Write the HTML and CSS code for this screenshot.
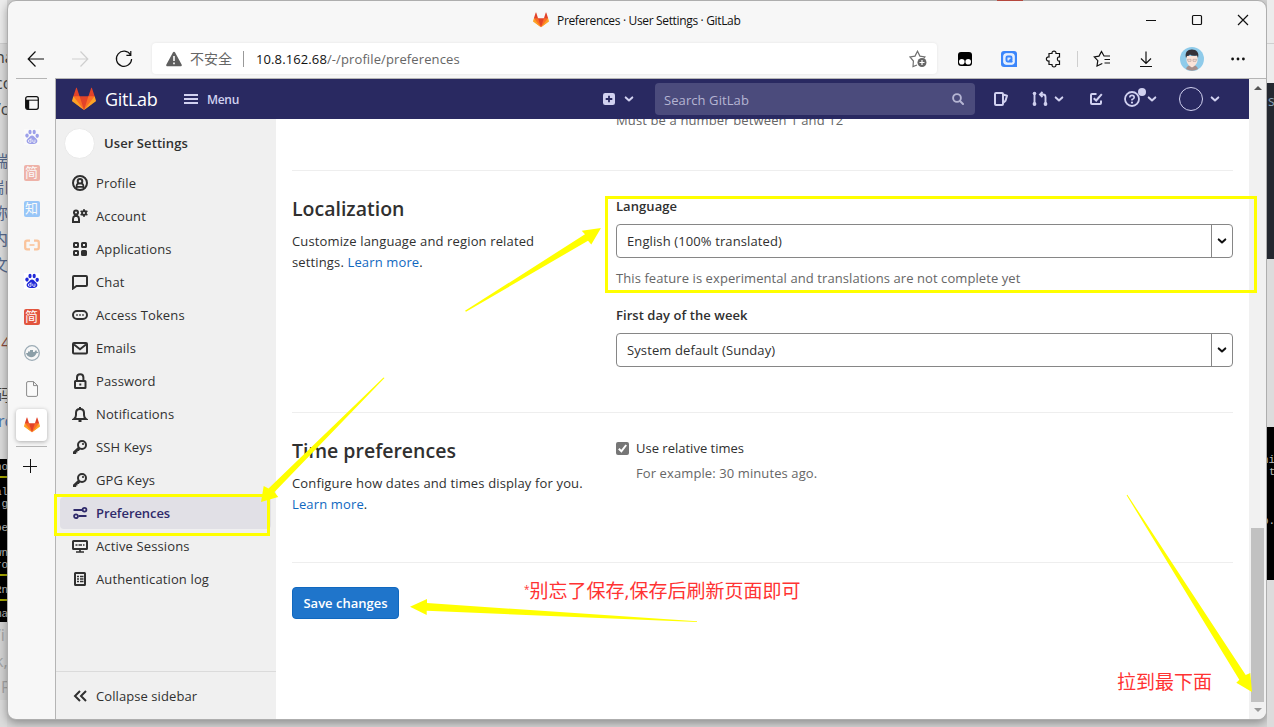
FILE: index.html
```html
<!DOCTYPE html>
<html lang="en">

<head>
    <meta charset="UTF-8">
    <meta name="viewport" content="width=device-width, initial-scale=1.0">
    <title>Preferences · User Settings · GitLab</title>
    <link rel="stylesheet" href="styles.css">
</head>

<body>
    <!-- shared icons -->
    <svg class="sprite">
        <symbol id="tanuki" viewBox="0 0 36 36">
            <path fill="#e24329" d="M2 14l9.38 9v-9l-4-12.28c-.205-.632-1.176-.632-1.38 0z" />
            <path fill="#e24329" d="M34 14l-9.38 9v-9l4-12.28c.205-.632 1.176-.632 1.38 0z" />
            <path fill="#e24329" d="M18 34.38L3 14h30z" />
            <path fill="#fc6d26" d="M18 34.38L11.38 14H2l4 11z" />
            <path fill="#fc6d26" d="M18 34.38L24.62 14H34l-4 11z" />
            <path fill="#fca326" d="M2 14L.1 20.16c-.18.565 0 1.2.5 1.56L18 34.38z" />
            <path fill="#fca326" d="M34 14l1.9 6.16c.18.565 0 1.2-.5 1.56L18 34.38z" />
        </symbol>
        <symbol id="chevron" viewBox="0 0 10 10">
            <path d="M1.7 3.4L5 6.5l3.3-3.1" fill="none" stroke="currentColor" stroke-width="2" stroke-linecap="round" stroke-linejoin="round" />
        </symbol>
        <symbol id="paw" viewBox="0 0 16 16">
            <g fill="currentColor">
                <ellipse cx="3" cy="6.600" rx="1.700" ry="2.100" />
                <ellipse cx="6" cy="3" rx="1.600" ry="2.200" />
                <ellipse cx="10.200" cy="3" rx="1.600" ry="2.200" />
                <ellipse cx="13.200" cy="6.800" rx="1.700" ry="2.100" />
                <path d="M8 6.400c1.600 0 2.200 1.300 3.200 2.400 1.200 1.200 2.600 2 2.100 4-.4 1.800-2.300 2.300-5.300 2.300s-4.900-.5-5.300-2.300c-.5-2 .9-2.800 2.100-4C5.800 7.700 6.400 6.400 8 6.400z" />
            </g>
            <path d="M7 9.200v4.100H5.700a1.200 1.200 0 0 1 0-2.600H7M8.800 10.700v1.800q0 .8.900.8h1.300v-2.600" fill="none" stroke="#fff" stroke-width=".8" />
        </symbol>
        <symbol id="key" viewBox="0 0 16 16">
            <circle cx="10" cy="6" r="4" fill="none" stroke="currentColor" stroke-width="2" />
            <circle cx="11" cy="5" r="1.100" fill="currentColor" />
            <path fill="currentColor" d="M6.300 7.800l2.200 2.200L6.800 12H5.500v1.500H4.200V15H1v-2.300z" />
        </symbol>
    </svg>

    <div class="desktop">
        <div class="behind behind-left">
            <div class="doc-top"></div>
            <div class="doc">
                <p>na</p>
                <p>co</p>
                <p>/c</p>
                <p></p>
                <p class="blue">端</p>
                <p class="blue cut">端口</p>
                <p class="blue">称</p>
                <p class="blue">内</p>
                <p class="blue">文</p>
                <p></p>
                <p></p>
                <p class="red">14</p>
                <p></p>
                <p>码</p>
                <p class="link">rc</p>
            </div>
            <div class="term">
                <p>ho</p>
                <p class="mark"></p>
                <p>al</p>
                <p>'g</p>
                <p></p>
                <p>be</p>
                <p></p>
                <p>wn</p>
                <p>ro</p>
                <p class="mark"></p>
                <p>Rn</p>
                <p class="mark"></p>
                <p>ma</p>
            </div>
            <div class="doc-faded">
                <p>/i</p>
                <p>k,</p>
                <p class="last">F</p>
            </div>
        </div>

        <div class="window">
            <div class="titlebar">
                <div class="page-title">
                    <svg width="16" height="16"><use href="#tanuki" /></svg>
                    <span>Preferences · User Settings · GitLab</span>
                </div>
                <div class="controls">
                    <svg width="46" height="38"><path d="M18 19.500h10" /></svg>
                    <svg width="46" height="38"><rect x="18.500" y="14.500" width="9" height="9" rx="1" /></svg>
                    <svg width="46" height="38"><path d="M18 14l10 10M28 14L18 24" /></svg>
                </div>
            </div>

            <div class="toolbar">
                <div class="tool"><svg width="18" height="18" viewBox="0 0 18 18"><path d="M17 9H1.500M8.500 1.500L1.200 9l7.300 7.500" /></svg></div>
                <div class="tool off"><svg width="18" height="18" viewBox="0 0 18 18"><path d="M1 9h15.500M9.500 1.500L16.800 9l-7.300 7.500" /></svg></div>
                <div class="tool"><svg width="18" height="18" viewBox="0 0 18 18"><path d="M15.600 5A7.600 7.600 0 1 0 16.600 9M15.800 1v4.300h-4.400" /></svg></div>

                <div class="address">
                    <svg width="16" height="16" viewBox="0 0 16 16">
                        <path fill="#5f5f5f" d="M8 .8c.5 0 .9.300 1.100.7l6.500 12c.5.900 0 1.700-1 1.700H1.400c-1 0-1.500-.8-1-1.700l6.500-12c.2-.4.600-.7 1.100-.7z" />
                        <path stroke="#fff" stroke-width="1.600" d="M8 5v5M8 11.500v1.700" />
                    </svg>
                    <span class="insecure">不安全</span>
                    <span class="url"><b>10.8.162.68</b>/-/profile/preferences</span>
                    <svg class="fav" width="18" height="18" viewBox="0 0 18 18">
                        <path fill="none" stroke="#707070" stroke-width="1.200" d="M8 15l-4 1.500.4-5.500L1 7l5-.9L8.500 1.200l2.400 4.900 5 .9-1.200 1.500" />
                        <circle cx="13" cy="12.500" r="4.500" fill="#666" />
                        <path stroke="#fff" stroke-width="1.200" d="M13 10v5M10.500 12.500h5" />
                    </svg>
                </div>

                <div class="tools">
                    <div class="tool">
                        <svg width="16" height="16" viewBox="0 0 16 16">
                            <rect x="1" y="1" width="14" height="14" rx="3" fill="#000" stroke="none" />
                            <circle cx="4.800" cy="10.800" r="2.800" fill="#fff" stroke="none" />
                            <circle cx="11.200" cy="10.800" r="2.800" fill="#fff" stroke="none" />
                        </svg>
                    </div>
                    <div class="tool">
                        <svg width="16" height="16" viewBox="0 0 16 16">
                            <path fill="#3b86fb" stroke="none" d="M3 0h10a3 3 0 0 1 3 3v13H3a3 3 0 0 1-3-3V3a3 3 0 0 1 3-3z" />
                            <rect x="2.800" y="2.800" width="10.400" height="10.400" rx="2" fill="#dbe9ff" stroke="#fff" stroke-width="1" />
                            <path fill="none" stroke="#3b86fb" stroke-width="1.900" d="M6.700 5.500h2.600a1.200 1.200 0 0 1 1.200 1.200v2.600a1.200 1.200 0 0 1-1.200 1.200H6.700a1.200 1.200 0 0 1-1.200-1.200V6.700a1.200 1.200 0 0 1 1.200-1.200zM8.500 8.500l2.700 2.700" />
                        </svg>
                    </div>
                    <div class="tool puzzle">
                        <svg width="18" height="18" viewBox="0 0 18 18">
                            <path d="M4 3.500h3C6.600.2 11.400.2 11 3.500h3.500V7c-2.800-.6-2.800 4.600 0 4v3.500H11c.4 3.300-4.400 3.300-4 0H4V11C.5 11.500.5 6.500 4 7z" />
                        </svg>
                    </div>
                    <i class="sep"></i>
                    <div class="tool">
                        <svg width="18" height="18" viewBox="0 0 18 18">
                            <path d="M9.300 13.500L4 16l.8-5.300L1.300 7l4.700-.9L8.500 1.500 11 6h6M11.500 9.500H17M11.500 13H17" />
                        </svg>
                    </div>
                    <div class="tool"><svg width="16" height="18" viewBox="0 0 16 18"><path d="M8 1.500v12M3 8.500l5 5 5-5M2 16.500h12" /></svg></div>
                    <div class="tool face">
                        <svg width="24" height="24" viewBox="0 0 24 24">
                            <circle cx="12" cy="12" r="12" fill="#8fcbea" stroke="none" />
                            <path d="M6 22q1-4 6-4t6 4q-6 3.500-12 0z" fill="#a68f8b" stroke="none" />
                            <path d="M6.500 9h11v5q-1 4-5.500 6.500Q7.500 18 6.500 14z" fill="#fbe3d8" stroke="none" />
                            <path d="M6 11C4.500 5 8 2.300 12 2.500c4.500 0 7.500 3 6 8.500l-1-2.500q-5 1-7-1-1 1.500-3 1.500z" fill="#343239" stroke="none" />
                            <path d="M7.500 12.300h3.500v2H8zM13 12.300h3.500l-.5 2h-3z" stroke="#a99" stroke-width=".6" />
                        </svg>
                    </div>
                    <div class="tool">
                        <svg width="16" height="6" viewBox="0 0 16 6"><g fill="#111" stroke="none"><circle cx="2.600" cy="3" r="1.400" /><circle cx="8" cy="3" r="1.400" /><circle cx="13.400" cy="3" r="1.400" /></g></svg>
                    </div>
                </div>
            </div>

            <div class="content">
                <div class="tabs">
                    <div class="tab first"><svg width="14" height="14" viewBox="0 0 14 14"><rect x=".7" y=".7" width="12.600" height="12.600" rx="2" fill="none" stroke="#111" stroke-width="1.300" /><path d="M1 4.200h12.500" stroke="#111" /><path d="M1 4h3.200v9H2a1 1 0 0 1-1-1z" fill="#111" /></svg></div>
                    <div class="tab faded"><svg class="paw" width="16" height="16"><use href="#paw" /></svg></div>
                    <div class="tab faded"><span class="square jian">简</span></div>
                    <div class="tab faded"><span class="square zhi">知</span></div>
                    <div class="tab faded"><svg width="16" height="12" viewBox="0 0 16 12"><path d="M6 1.700H3Q1.200 1.700 1.200 3.500v5q0 1.800 1.800 1.800h3M10 1.700h3q1.800 0 1.800 1.800v5q0 1.800-1.800 1.800h-3" fill="none" stroke="#ff7f20" stroke-width="2.300" /><path d="M5.500 6h5" stroke="#ff7f20" stroke-width="1.600" /></svg></div>
                    <div class="tab"><svg class="paw" width="16" height="16"><use href="#paw" /></svg></div>
                    <div class="tab"><span class="square jian">简</span></div>
                    <div class="tab"><svg width="16" height="16" viewBox="0 0 16 16"><circle cx="8" cy="8" r="7.300" fill="none" stroke="#9babb5" stroke-width="1.300" /><path d="M2 8h2V6.500h2V5h3v2h1.500q1-1.500 1.500-2 .8.800.8 1.800 1 0 1.600.4-.7 1-2 1Q11 12 7 12.200 3 12 2 8z" fill="#8c9fa8" /></svg></div>
                    <div class="tab"><svg width="12" height="16" viewBox="0 0 12 16"><path d="M2 .6h5.500l4 4V14q0 1.400-1.300 1.400H2Q.6 15.400.6 14V2Q.6.6 2 .6zM7.500.6v4h4" fill="#fafafa" stroke="#8a8a8a" /></svg></div>
                    <div class="tab current"><svg width="16" height="16"><use href="#tanuki" /></svg></div>
                    <div class="tab add"><svg width="14" height="14"><path d="M7.500 0v14M0 7.500h14" stroke="#111" /></svg></div>
                </div>

                <div class="page">
                    <div class="navbar">
                        <svg width="24" height="24"><use href="#tanuki" /></svg>
                        <span class="wordmark">GitLab</span>
                        <svg class="burger" width="14" height="12"><path d="M0 2h14M0 6h14M0 10h14" stroke="#d1d1f0" stroke-width="2" /></svg>
                        <span class="menu">Menu</span>
                        <svg class="plus" width="12" height="12" viewBox="0 0 12 12"><rect width="12" height="12" rx="2.200" fill="#d1d1f0" /><path d="M6 2.700v6.600M2.700 6h6.600" stroke="#292961" stroke-width="1.800" /></svg>
                        <svg class="caret plus-caret" width="10" height="10"><use href="#chevron" /></svg>
                        <div class="search">
                            <span>Search GitLab</span>
                            <svg width="12" height="12" viewBox="0 0 12 12"><circle cx="5" cy="5" r="3.900" fill="none" stroke="#b5b5d3" stroke-width="1.900" /><path d="M8 8l3 3" stroke="#b5b5d3" stroke-width="2" stroke-linecap="round" /></svg>
                        </div>
                        <svg class="issues" width="15" height="14" viewBox="0 0 15 14"><path d="M2 1h6a1 1 0 0 1 1 1v10a1 1 0 0 1-1 1H2a1 1 0 0 1-1-1V2a1 1 0 0 1 1-1zM9 2.500l4 1.300-1.500 5L9 11" fill="none" stroke="#d1d1f0" stroke-width="2" stroke-linejoin="round" /></svg>
                        <svg class="merge" width="16" height="16" viewBox="0 0 16 16"><path d="M2.500 4v8M13.500 12V6q0-2.500-2.500-2.500H8.500M10.500 1L8 3.500 10.500 6" fill="none" stroke="#d1d1f0" stroke-width="1.900" /><g fill="#d1d1f0"><circle cx="2.500" cy="2.500" r="1.800" /><circle cx="2.500" cy="13" r="1.900" /><circle cx="13.500" cy="13" r="1.900" /></g></svg>
                        <svg class="caret merge-caret" width="10" height="10"><use href="#chevron" /></svg>
                        <svg class="todo" width="14" height="14" viewBox="0 0 14 14"><path d="M7.500 2H3a1 1 0 0 0-1 1v8a1 1 0 0 0 1 1h8a1 1 0 0 0 1-1V8.500M4.700 6.200L7.200 8.500l5.600-6.300" fill="none" stroke="#d1d1f0" stroke-width="2" /></svg>
                        <div class="help">
                            <svg width="16" height="16" viewBox="0 0 16 16"><circle cx="8" cy="8" r="7" fill="none" stroke="#d1d1f0" stroke-width="1.800" /><path d="M5.800 6.500Q5.800 4.400 8 4.400t2.200 2Q10.200 7.600 8 8.500v1" fill="none" stroke="#d1d1f0" stroke-width="1.600" /><circle cx="8" cy="11.600" r="1.100" fill="#d1d1f0" /></svg>
                            <i class="dot"></i>
                        </div>
                        <svg class="caret help-caret" width="10" height="10"><use href="#chevron" /></svg>
                        <i class="me"></i>
                        <svg class="caret me-caret" width="10" height="10"><use href="#chevron" /></svg>
                    </div>

                    <div class="layout">
                        <div class="sidebar">
                            <div class="side-head"><i class="avatar"></i>User Settings</div>
                            <a class="side-item"><svg viewBox="0 0 16 16"><circle cx="8" cy="8" r="7" /><circle cx="8" cy="6.200" r="2.300" /><path d="M4.600 13V11q0-2 2-2.300M11.400 13V11q0-2-2-2.300M4.500 11.800h7" stroke-width="1.700" /></svg>Profile</a>
                            <a class="side-item"><svg viewBox="0 0 16 16"><circle cx="4" cy="4.500" r="2" /><path d="M1 14v-3q0-2.300 1.700-3h2.600Q7 8.700 7 11v3z" /><circle cx="12" cy="5" r="2" stroke-width="1.800" /><path d="M12 1v8M8.600 3l6.800 4M15.400 3L8.600 7" stroke-width="1.500" /><circle cx="12" cy="5" r="1" fill="#f0f0f0" stroke="none" /></svg>Account</a>
                            <a class="side-item"><svg viewBox="0 0 16 16"><rect x="2" y="2" width="4" height="4" rx=".5" /><rect x="10" y="2" width="4" height="4" rx=".5" /><rect x="2" y="10" width="4" height="4" rx=".5" /><rect x="10" y="10" width="4" height="4" rx=".5" fill="currentColor" /></svg>Applications</a>
                            <a class="side-item"><svg viewBox="0 0 16 16"><path d="M1 14V3q0-1 1-1h12q1 0 1 1v8q0 1-1 1H4.500L1 14.500z" /></svg>Chat</a>
                            <a class="side-item"><svg viewBox="0 0 16 16"><rect x="1" y="4" width="14" height="8" rx="4" /><path d="M4.200 8h1.600M7.200 8h1.600M10.200 8h1.600" stroke-width="1.600" /></svg>Access Tokens</a>
                            <a class="side-item"><svg viewBox="0 0 16 16"><rect x="1" y="3" width="14" height="10.500" rx="1" /><path d="M2 4.500l6 4.700 6-4.700" /></svg>Emails</a>
                            <a class="side-item"><svg viewBox="0 0 16 16"><rect x="3" y="8" width="10.500" height="7" rx=".5" /><path d="M5 8V4.500Q5 1.200 8.200 1.200t3.200 3.300V8" /><path d="M7.300 11.500h2" /></svg>Password</a>
                            <a class="side-item"><svg viewBox="0 0 16 16"><path d="M2 13q2-1.500 2-4V7q0-4 4-4t4 4v2q0 2.500 2 4z" /><path d="M8 1v2M6.500 15h3" /></svg>Notifications</a>
                            <a class="side-item"><svg viewBox="0 0 16 16" class="plain"><use href="#key" /></svg>SSH Keys</a>
                            <a class="side-item"><svg viewBox="0 0 16 16" class="plain"><use href="#key" /></svg>GPG Keys</a>
                            <a class="side-item active"><svg viewBox="0 0 16 16"><path d="M1.500 5H10M6.500 11H14.500" /><circle cx="12.500" cy="4.700" r="1.900" stroke-width="1.800" /><circle cx="4" cy="11.200" r="1.900" stroke-width="1.800" /></svg>Preferences</a>
                            <a class="side-item"><svg viewBox="0 0 16 16"><rect x="1" y="3" width="14" height="8" rx=".5" /><path d="M3.500 7h2M6.500 7h3.500M11 7h1.500M8 11v3M4 14h8" stroke-width="1.700" /></svg>Active Sessions</a>
                            <a class="side-item"><svg viewBox="0 0 16 16"><rect x="3" y="2" width="10" height="12" rx=".5" /><path d="M5 5.500h2M8 5.500h3.500M5 8h2M8 8h3.500M5 10.500h2M8 10.500h3.500" stroke-width="1.300" /></svg>Authentication log</a>
                            <a class="side-item collapse"><svg viewBox="0 0 16 16"><path d="M8 3L3 8l5 5M14 3L9 8l5 5" /></svg>Collapse sidebar</a>
                        </div>

                        <div class="main">
                            <p class="hint clipped">Must be a number between 1 and 12</p>

                            <div class="row localization">
                                <div class="about">
                                    <h4>Localization</h4>
                                    <p>Customize language and region related<br>settings. <a>Learn more</a>.</p>
                                </div>
                                <div class="fields">
                                    <label>Language</label>
                                    <div class="select"><span>English (100% translated)</span><i><svg width="10" height="10"><use href="#chevron" /></svg></i></div>
                                    <p class="hint">This feature is experimental and translations are not complete yet</p>
                                    <label class="second">First day of the week</label>
                                    <div class="select"><span>System default (Sunday)</span><i><svg width="10" height="10"><use href="#chevron" /></svg></i></div>
                                </div>
                            </div>

                            <div class="row time">
                                <div class="about">
                                    <h4>Time preferences</h4>
                                    <p>Configure how dates and times display for you.<br><a>Learn more</a>.</p>
                                </div>
                                <div class="fields">
                                    <div class="check">
                                        <svg width="13" height="13" viewBox="0 0 13 13"><rect width="13" height="13" rx="2" fill="#767676" /><path d="M2.800 6.800l2.600 2.500 4.800-6.300" fill="none" stroke="#fff" stroke-width="2" /></svg>
                                        <span>Use relative times</span>
                                    </div>
                                    <p class="hint example">For example: 30 minutes ago.</p>
                                </div>
                            </div>

                            <div class="row save">
                                <button class="btn">Save changes</button>
                            </div>
                        </div>
                    </div>
                </div>

                <div class="scrollbar">
                    <i class="up"></i>
                    <i class="thumb"></i>
                    <i class="down"></i>
                </div>
            </div>
        </div>

        <div class="behind behind-right">
            <div class="doc-top"></div>
            <div class="strip"></div>
            <div class="editor">s</div>
            <div class="gap"></div>
            <div class="term">
                <p></p>
                <p></p>
                <p>ni</p>
                <p class="near">t</p>
                <p></p>
                <p></p>
                <p></p>
                <p>b.</p>
            </div>
        </div>
    </div>

    <!-- notes drawn over the screen -->
    <div class="box box-language"></div>
    <div class="box box-preferences"></div>
    <svg class="arrows" width="1274" height="727" fill="#ffff00">
        <path d="M601 228L581.700 230.700l3.300 3.600L465 310.800l1 1L588 240.700l3.300 3.700z" />
        <path d="M261 502l2.700-16 4.800 2.500L383.500 377.500l1 .6L274.500 492l3.700 5z" />
        <path d="M410 606.800l17-7.800v4l270 18.300v.7l-270.300-11.200V615z" />
        <path d="M1252 692l-1.700-19-4.600 2L1127.400 494.800l-.8.5 112.700 184.400-3 3z" />
    </svg>
    <div class="note note-save"><sup>*</sup>别忘了保存,保存后刷新页面即可</div>
    <div class="note note-scroll">拉到最下面</div>
    <i class="scrap"></i>
</body>

</html>
```
FILE: styles.css
```css
* {
    box-sizing: border-box;
}

body {
    margin: 0;
    position: relative;
    width: 1274px;
    height: 727px;
    overflow: hidden;
    background: #d6d6d6;
    font-family: "Open Sans", "Noto Sans CJK SC", sans-serif;
    font-size: 13px;
    color: #303030;
}

p, h4 {
    margin: 0;
}

svg {
    display: block;
    flex: none;
}

.sprite {
    position: absolute;
    width: 0;
    height: 0;
}

.desktop {
    display: flex;
    height: 727px;
}

/* slivers of the windows behind the browser */
.behind {
    width: 7px;
    height: 727px;
    overflow: hidden;
    white-space: nowrap;
    background: #dcdcdc;
}

.doc-top {
    height: 44px;
    background: #ececec;
    border-bottom: 1px solid #cfcfcf;
}

.doc {
    height: 415px;
    font-size: 16px;
    line-height: 26px;
    color: #444;
}

.doc p,
.doc-faded p {
    height: 26px;
    margin-left: -5px;
}

.doc .blue {
    color: #56698c;
    margin-left: -8px;
}

.doc .cut {
    margin-left: -12px;
}

.doc .red {
    color: #8b4a3c;
    margin-left: -8px;
}

.doc .link {
    color: #4a78b0;
    margin-left: -2px;
}

.doc-faded .last {
    margin-left: 1px;
}

.term {
    height: 163px;
    padding-top: 2px;
    background: #000;
    color: #bbb;
    font-family: "Liberation Mono", monospace;
    font-size: 11px;
    line-height: 12.25px;
}

.term p {
    height: 12.25px;
    margin-left: -5px;
}

.term .near {
    margin-left: 2px;
}

.term .mark {
    border-bottom: 2px solid #a5a500;
    height: 5px;
    margin-bottom: 7.25px;
}

.doc-faded {
    height: 78px;
    background: #d3d3d3;
    font-size: 16px;
    line-height: 26px;
    color: #a5a5a5;
}

.behind-right .strip {
    height: 39px;
    background: #ececec;
}

.editor {
    height: 176px;
    padding: 8px 0 0 1px;
    background: #242830;
    color: #8aa0b4;
    font-size: 14px;
}

.behind-right .gap {
    height: 168px;
}

.behind-right .term {
    height: 153px;
}

/* browser */
.window {
    display: flex;
    flex-direction: column;
    width: 1260px;
    height: 720px;
    border: 1px solid #aeaeae;
    border-radius: 9px;
    overflow: hidden;
    background: #f7f7f7;
    box-shadow: 0 3px 10px rgba(0, 0, 0, .35);
}

.titlebar {
    display: flex;
    height: 38px;
    justify-content: space-between;
}

.page-title {
    display: flex;
    align-items: center;
    gap: 8px;
    margin-left: 525px;
    font-size: 12px;
    letter-spacing: -.34px;
    color: #111;
}

.controls {
    display: flex;
}

.controls svg,
.tool svg {
    fill: none;
    stroke: #111;
    stroke-width: 1.2;
}

.toolbar {
    display: flex;
    align-items: center;
    height: 39px;
    padding-left: 6px;
}

.tool {
    width: 44px;
    display: flex;
    justify-content: center;
}

.tool.off svg {
    stroke: #cfcfcf;
}

.address {
    display: flex;
    align-items: center;
    width: 785px;
    height: 31px;
    margin-left: 6px;
    padding: 0 10px 0 14px;
    border-radius: 4px;
    background: #fff;
    box-shadow: 0 0 3px rgba(0, 0, 0, .08);
}

.insecure {
    margin-left: 8px;
    width: 54px;
    font-size: 14px;
    line-height: 16px;
    color: #666;
    border-right: 1px solid #999;
}

.url {
    margin-left: 12px;
    letter-spacing: .11px;
    color: #666;
}

.url b {
    font-weight: 400;
    color: #111;
}

.fav {
    margin-left: auto;
}

.tools {
    display: flex;
    align-items: center;
    margin-left: 6px;
}

.puzzle {
    padding-left: 2px;
}

.sep {
    width: 1px;
    height: 16px;
    margin: 0 2px;
    background: #cfcfcf;
}

.face {
    margin: 0 2px;
}

.content {
    display: flex;
    flex: 1;
    min-height: 0;
}

.tabs {
    display: flex;
    flex-direction: column;
    align-items: center;
    width: 47px;
}

.tab {
    display: flex;
    align-items: center;
    justify-content: center;
    width: 31px;
    height: 36px;
    flex: none;
}

.first {
    height: 41px;
    padding-top: 8px;
    border-top: 1px solid #b5b5b5;
}

.faded svg,
.faded .square {
    opacity: .42;
}

.paw {
    color: #2129d8;
    background: #fff;
}

.square {
    width: 16px;
    height: 16px;
    border-radius: 2px;
    color: #fff;
    font-size: 13px;
    line-height: 15px;
    text-align: center;
}

.jian {
    background: #e2553e;
}

.zhi {
    background: #1684fb;
}

.current {
    height: 32px;
    margin: 2px 0 5px;
    border-radius: 4px;
    background: #fff;
    box-shadow: 0 1px 4px rgba(0, 0, 0, .3);
}

.add {
    height: 39px;
    padding-right: 3px;
    border-top: 1px solid #b5b5b5;
}

.page {
    display: flex;
    flex-direction: column;
    width: 1194px;
    border-top: 1px solid #b5b5b5;
    border-left: 1px solid #b5b5b5;
}

.navbar {
    display: flex;
    align-items: center;
    height: 40px;
    flex: none;
    padding-left: 16px;
    background: #292961;
    color: #d1d1f0;
}

.wordmark {
    width: 79px;
    padding-left: 9px;
    color: #fff;
    font-size: 18px;
    letter-spacing: -.35px;
}

.burger {
    margin-left: 9px;
}

.menu {
    width: 396px;
    margin-left: 9px;
    font-size: 12px;
    font-weight: 600;
    letter-spacing: -.3px;
}

.plus-caret {
    margin-left: 9px;
}

.search {
    display: flex;
    align-items: center;
    justify-content: space-between;
    width: 320px;
    height: 32px;
    margin-left: 21px;
    padding: 0 11px 0 9px;
    border-radius: 4px;
    background: #4b4b7c;
    color: #b5b5d3;
}

.search span {
    padding-top: 2px;
    letter-spacing: .08px;
}

.issues {
    margin-left: 19px;
}

.merge {
    margin-left: 23px;
}

.merge-caret {
    margin-left: 6px;
}

.todo {
    margin-left: 25px;
}

.help {
    position: relative;
    margin-left: 21px;
}

.dot {
    position: absolute;
    top: -3px;
    left: 14px;
    width: 8px;
    height: 8px;
    border-radius: 50%;
    background: #d1d1f0;
}

.help-caret {
    margin-left: 7px;
}

.me {
    width: 24px;
    height: 24px;
    margin-left: 22px;
    border: 1px solid #d1d1f0;
    border-radius: 50%;
}

.me-caret {
    margin-left: 7px;
}

.layout {
    display: flex;
    flex: 1;
    min-height: 0;
}

.sidebar {
    display: flex;
    flex-direction: column;
    width: 220px;
    background: #f0f0f0;
}

.side-head {
    display: flex;
    align-items: center;
    gap: 9px;
    height: 48px;
    padding-left: 8px;
    font-weight: 600;
    letter-spacing: .08px;
    flex: none;
}

.avatar {
    width: 31px;
    height: 31px;
    border: 1px solid #eaeaea;
    border-radius: 50%;
    background: #fff;
}

.side-item {
    display: flex;
    align-items: center;
    gap: 8px;
    height: 32px;
    flex: none;
    margin: 0 5px 1px 4px;
    padding-left: 12px;
    border-radius: 4px;
    letter-spacing: .13px;
}

.side-item svg {
    width: 16px;
    height: 16px;
    fill: none;
    stroke: currentColor;
    stroke-width: 2;
}

.side-item .plain {
    stroke: none;
}

.active {
    background: #e1e0e6;
    color: #2f2a6b;
    font-weight: 600;
    letter-spacing: -.08px;
}

.collapse {
    height: 48px;
    margin: auto 0 0;
    padding-left: 16px;
    border-top: 1px solid #dbdbdb;
    border-radius: 0;
    letter-spacing: .08px;
}

.main {
    width: 973px;
    padding: 0 16px;
    background: #fff;
    overflow: hidden;
}

.hint {
    color: #666;
    line-height: 20px;
    letter-spacing: .08px;
}

.clipped {
    margin: -9px 0 40px 324px;
    letter-spacing: .13px;
}

.row {
    display: flex;
    border-top: 1px solid #eee;
}

.localization {
    height: 242px;
}

.time {
    height: 150px;
}

.about {
    width: 324px;
    padding-top: 24px;
    line-height: 21px;
    letter-spacing: .14px;
}

.about h4 {
    margin-bottom: 8px;
    font-size: 19.5px;
    line-height: 28px;
    font-weight: 600;
    letter-spacing: 0;
}

.about a {
    color: #1068bf;
}

.fields {
    flex: 1;
    padding-top: 25px;
}

label {
    display: block;
    line-height: 20px;
    font-weight: 600;
    letter-spacing: .06px;
}

.select {
    display: flex;
    align-items: center;
    justify-content: space-between;
    height: 34px;
    margin: 8px 0 10px;
    padding-left: 10px;
    border: 1px solid #868686;
    border-radius: 4px;
    letter-spacing: .11px;
}

.select i {
    display: flex;
    align-items: center;
    justify-content: center;
    width: 21px;
    height: 32px;
    border-left: 1px solid #868686;
    color: #111;
}

.second {
    margin-top: 17px;
}

.check {
    display: flex;
    align-items: center;
    gap: 7px;
    height: 20px;
}

.example {
    margin: 5px 0 0 20px;
    letter-spacing: .1px;
}

.btn {
    width: 107px;
    height: 32px;
    margin-top: 24px;
    padding: 0;
    border: 1px solid #1068bf;
    border-radius: 4px;
    background: #1f75cb;
    color: #fff;
    font: inherit;
    font-weight: 600;
}

.scrollbar {
    display: flex;
    flex-direction: column;
    align-items: center;
    width: 17px;
    border-top: 1px solid #b5b5b5;
    background: #f1f1f1;
}

.up,
.down {
    border: 4px solid transparent;
}

.up {
    margin-top: 3px;
    border-bottom-color: #555;
}

.thumb {
    width: 13px;
    height: 174px;
    margin-top: auto;
    background: #c1c1c1;
}

.down {
    margin: 6px 0 3px;
    border-top-color: #999;
}

/* notes */
.box {
    position: absolute;
    border: 3px solid #ff0;
}

.box-language {
    left: 605px;
    top: 196px;
    width: 652px;
    height: 97px;
}

.box-preferences {
    left: 54px;
    top: 494px;
    width: 216px;
    height: 42px;
}

.arrows {
    position: absolute;
    left: 0;
    top: 0;
}

.note {
    position: absolute;
    color: #ff3333;
    font-size: 19px;
    line-height: 28px;
    white-space: nowrap;
}

.note-save {
    left: 524px;
    top: 577px;
}

.note-save sup {
    font-size: 10px;
    line-height: 0;
    vertical-align: 5px;
}

.note-scroll {
    left: 1117px;
    top: 668px;
}

.scrap {
    position: absolute;
    left: 997px;
    top: 0;
    width: 26px;
    height: 1px;
    background: #b5473d;
}
```
